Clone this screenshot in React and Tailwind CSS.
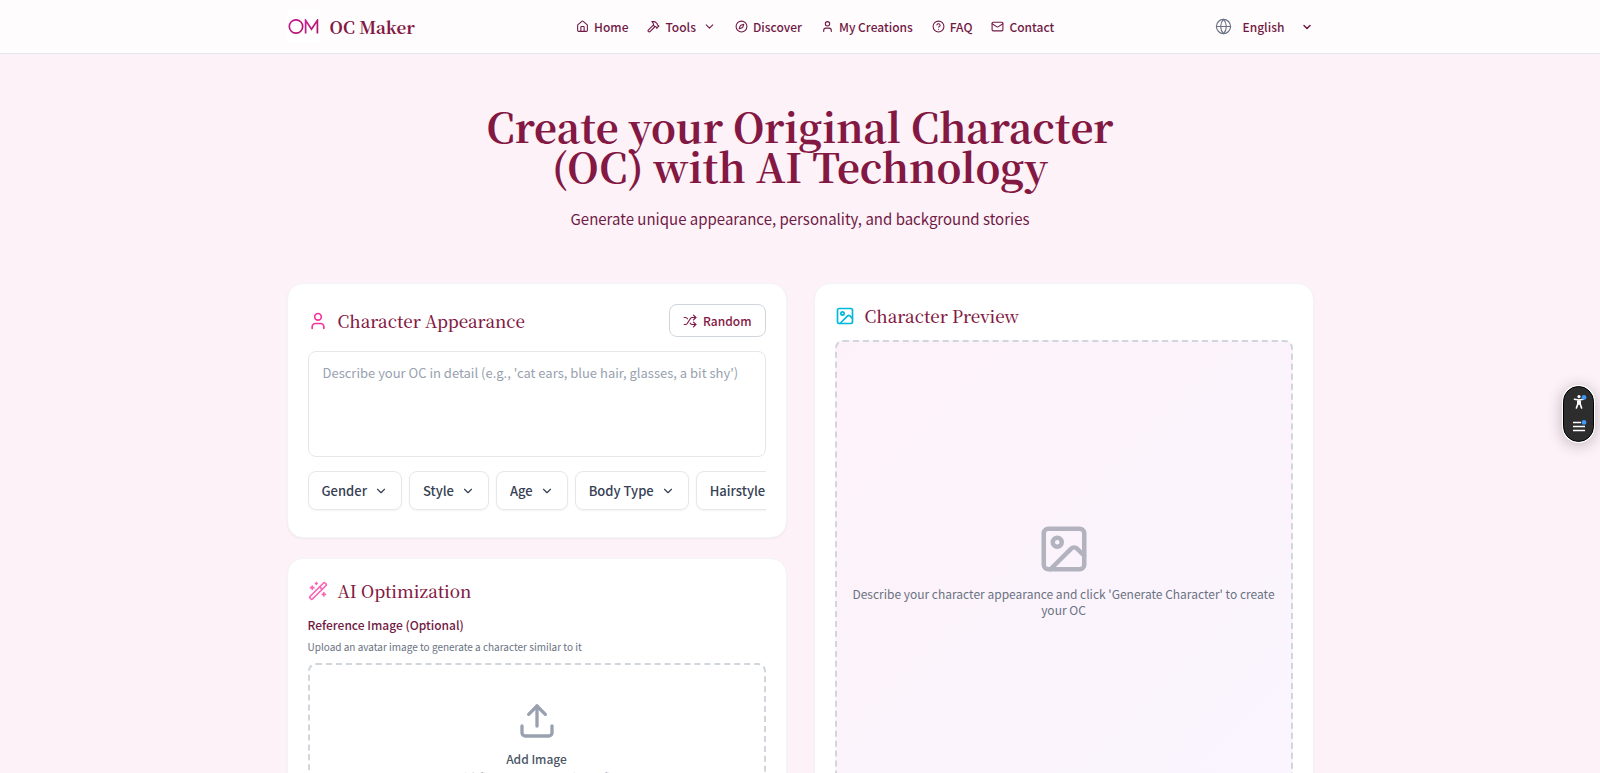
import { useState } from 'react'
import {
  ChevronDown,
  CircleHelp,
  Compass,
  Globe,
  Hammer,
  House,
  Image,
  Mail,
  Shuffle,
  Upload,
  User,
  WandSparkles,
} from 'lucide-react'

const NAV_LINKS = [
  { label: 'Home', icon: House },
  { label: 'Tools', icon: Hammer, hasMenu: true },
  { label: 'Discover', icon: Compass },
  { label: 'My Creations', icon: User },
  { label: 'FAQ', icon: CircleHelp },
  { label: 'Contact', icon: Mail },
]

const TRAITS = ['Gender', 'Style', 'Age', 'Body Type', 'Hairstyle']

const serif = "font-['Noto_Serif_CJK_SC','Noto_Serif_SC','Source_Serif_4','Liberation_Serif',serif]"

function Logo() {
  return (
    <span className="flex size-[33px] items-center justify-center rounded-sm bg-white">
      <svg viewBox="0 0 33 16" className="w-full" fill="none" stroke="url(#logo-fill)" strokeWidth="1.7">
        <defs>
          <linearGradient id="logo-fill" x1="0" y1="0" x2="1" y2="1">
            <stop offset="0" stopColor="#c81e9a" />
            <stop offset="1" stopColor="#b0105c" />
          </linearGradient>
        </defs>
        <circle cx="9" cy="7.5" r="6.7" />
        <path d="M18.6 14.5V1.3l5.9 8.8 5.9-8.8v13.2" />
      </svg>
    </span>
  )
}

function Header() {
  return (
    <header className="border-b border-gray-200 bg-[#fffcfe]">
      <div className="mx-auto flex h-[53px] max-w-[1027px] items-center justify-between">
        <a href="#home" className="flex items-center gap-2.5">
          <Logo />
          <span className={`${serif} text-[17px] leading-6 font-bold text-[#831843]`}>OC Maker</span>
        </a>
        <nav className="flex items-center gap-[19px] text-xs font-medium text-[#701a45]">
          {NAV_LINKS.map(({ label, icon: Icon, hasMenu }) => (
            <a key={label} href="#" className="flex items-center gap-[5px]">
              <Icon size={13} />
              {label}
              {hasMenu && <ChevronDown size={13} className="ml-0.5" />}
            </a>
          ))}
        </nav>
        <div className="flex items-center gap-2.5">
          <Globe size={17} strokeWidth={1.6} className="text-gray-500" />
          <div className="grid w-[71px] items-center">
            <select
              aria-label="Language"
              className="col-start-1 row-start-1 w-full appearance-none bg-transparent text-xs font-medium text-[#701a45] outline-none"
            >
              <option>English</option>
              <option>中文</option>
              <option>日本語</option>
            </select>
            <ChevronDown
              size={12}
              strokeWidth={3}
              className="pointer-events-none col-start-1 row-start-1 justify-self-end text-[#701a45]"
            />
          </div>
        </div>
      </div>
    </header>
  )
}

function Card({ children }) {
  return (
    <section className="min-w-0 rounded-2xl border border-gray-100 bg-white p-5 shadow-xs">
      {children}
    </section>
  )
}

function CardTitle({ icon: Icon, iconClass, children }) {
  return (
    <h2 className={`${serif} flex items-center gap-2.5 text-[17px] leading-6 font-medium text-[#831843]`}>
      <Icon size={20} className={iconClass} />
      {children}
    </h2>
  )
}

function AppearanceCard() {
  const [text, setText] = useState('')

  return (
    <Card>
      <div className="flex items-center justify-between">
        <CardTitle icon={User} iconClass="text-pink-500">
          Character Appearance
        </CardTitle>
        <button className="flex h-[33px] items-center gap-1.5 rounded-lg border border-gray-300 px-[13px] text-xs font-medium text-[#831843]">
          <Shuffle size={14} />
          Random
        </button>
      </div>
      <textarea
        aria-label="Describe your OC"
        value={text}
        onChange={(e) => setText(e.target.value)}
        placeholder="Describe your OC in detail (e.g., 'cat ears, blue hair, glasses, a bit shy')"
        className="mt-3.5 block h-[106px] w-full resize-none rounded-lg border border-gray-200 px-3.5 py-[9px] text-[13px] leading-6 outline-none placeholder:text-gray-400"
      />
      <div className="mt-3.5 flex gap-[7px] overflow-hidden pb-[7px]">
        {TRAITS.map((trait) => (
          <button
            key={trait}
            className="flex h-[39px] shrink-0 items-center gap-[7px] rounded-lg border border-gray-200 px-[13px] text-[13px] font-medium text-gray-700 shadow-xs"
          >
            {trait}
            <ChevronDown size={14} />
          </button>
        ))}
      </div>
    </Card>
  )
}

function OptimizationCard() {
  return (
    <Card>
      <CardTitle icon={WandSparkles} iconClass="text-pink-400">
        AI Optimization
      </CardTitle>
      <h3 className="mt-3 text-xs leading-5 font-medium text-[#701a45]">Reference Image (Optional)</h3>
      <p className="mt-1 text-[10px] leading-4 text-gray-500">
        Upload an avatar image to generate a character similar to it
      </p>
      <button className="mt-2 flex h-[160px] w-full flex-col items-center rounded-lg border-2 border-dashed border-gray-300 pt-9">
        <Upload size={40} className="text-gray-400" />
        <span className="mt-2 text-xs leading-5 font-medium text-gray-600">Add Image</span>
        <span className="text-[10px] leading-4 text-gray-400">Click file area or use your image file</span>
      </button>
    </Card>
  )
}

function PreviewCard() {
  return (
    <Card>
      <CardTitle icon={Image} iconClass="text-cyan-500">
        Character Preview
      </CardTitle>
      <div className="mt-3 flex h-[460px] flex-col items-center justify-center rounded-lg border-2 border-dashed border-gray-300 bg-linear-to-br from-[#fdf2f8] to-[#faf5ff] px-3 text-center">
        <Image size={54} className="text-[#b3b3c0]" />
        <p className="mt-2.5 text-xs leading-4 text-gray-500">
          Describe your character appearance and click 'Generate Character' to create your OC
        </p>
      </div>
    </Card>
  )
}

function AccessibilityWidget() {
  return (
    <button
      aria-label="Accessibility menu"
      className="fixed top-[386px] right-1.5 flex h-14 w-[31px] flex-col items-center justify-center gap-2.5 rounded-full border border-black bg-[#2d2d2d] shadow-[0_2px_16px_rgba(0,0,0,0.3)] ring-1 ring-white"
    >
      <svg width="16" height="16" viewBox="0 0 16 16" fill="none" stroke="#fff" strokeLinecap="round">
        <circle cx="8" cy="2.6" r="1.6" fill="#fff" stroke="none" />
        <path d="M3.4 5.2 8 6l4.4-.8M8 6v4M6.8 6v4l-1.4 4M9.2 6v4l1.4 4" strokeWidth="1.6" />
        <circle cx="13" cy="3.4" r="2.4" fill="#4098f7" stroke="none" />
      </svg>
      <svg width="16" height="14" viewBox="0 0 16 14" fill="none" stroke="#fff" strokeWidth="1.6">
        <path d="M2 2.5h8M2 6.5h12M2 10.5h12" />
        <circle cx="13" cy="2.4" r="2.4" fill="#4098f7" stroke="none" />
      </svg>
    </button>
  )
}

export default function App() {
  return (
    <div className="h-screen overflow-hidden bg-[#fdf2f8] font-['Noto_Sans_CJK_SC',sans-serif]">
      <Header />
      <main className="mx-auto max-w-[1027px]">
        <div className="mx-auto max-w-[680px] pt-[52px] pb-[50px] text-center">
          <h1 className={`${serif} text-[40px] leading-10 font-bold text-[#831843]`}>
            Create your Original Character (OC) with AI Technology
          </h1>
          <p className="mt-[19px] text-[15px] leading-7 text-[#701a45]">
            Generate unique appearance, personality, and background stories
          </p>
        </div>
        <div className="grid grid-cols-2 items-start gap-[27px]">
          <div className="flex min-w-0 flex-col gap-5">
            <AppearanceCard />
            <OptimizationCard />
          </div>
          <PreviewCard />
        </div>
      </main>
      <AccessibilityWidget />
    </div>
  )
}
